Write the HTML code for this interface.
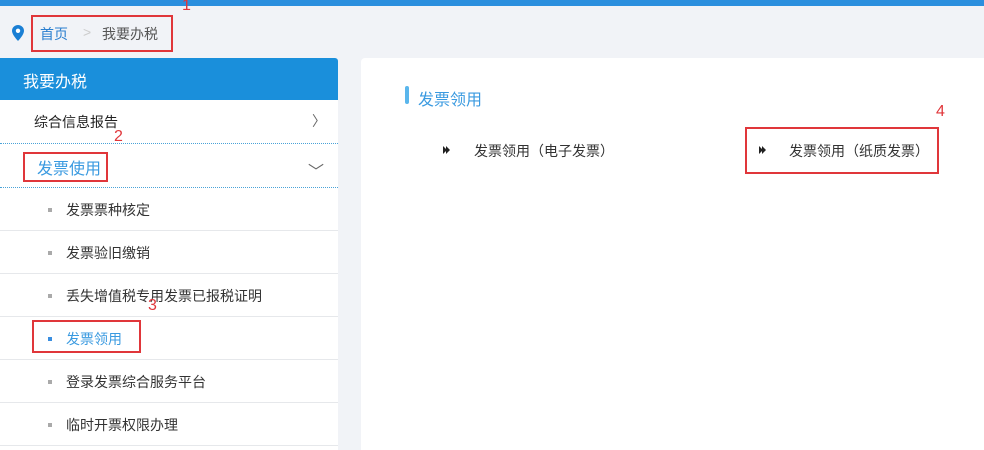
<!DOCTYPE html>
<html><head><meta charset="utf-8"><style>
*{margin:0;padding:0;box-sizing:border-box}
body{width:984px;height:450px;overflow:hidden;background:#f1f3f7;font-family:"Liberation Sans","Noto Sans CJK SC",sans-serif;position:relative;font-size:14px;color:#333}
.a{position:absolute}
.red{position:absolute;border:2px solid #e0363a}
.num{position:absolute;color:#e0363a;font-size:16px}
.sub{position:absolute;left:0;width:338px;height:43px;border-bottom:1px solid #e6e8eb;background:#fff}
.sub span{position:absolute;left:66px;top:12px;font-size:14px;color:#333}
.sub i{position:absolute;left:48px;top:20px;width:4px;height:4px;background:#aaa}
</style></head><body>
<div class="a" style="left:0;top:0;width:984px;height:6px;background:#2b8fde"></div>
<svg class="a" style="left:12px;top:25px" width="12" height="16" viewBox="0 0 12 16"><path d="M6 0C2.7 0 0 2.6 0 5.8 0 10 6 16 6 16s6-6 6-10.2C12 2.6 9.3 0 6 0z" fill="#1a7fd4"/><circle cx="6" cy="5.8" r="2.2" fill="#fff"/></svg>
<div class="a" style="left:40px;top:24px;color:#2a7fcf">首页</div>
<div class="a" style="left:83px;top:24px;color:#ccc">&gt;</div>
<div class="a" style="left:102px;top:24px;color:#555">我要办税</div>
<div class="red" style="left:31px;top:15px;width:142px;height:37px"></div>
<div class="num" style="left:182px;top:-3px">1</div>

<div class="a" style="left:0;top:58px;width:338px;height:392px;background:#fff;border-top-right-radius:3px"></div>
<div class="a" style="left:0;top:58px;width:338px;height:42px;background:#1a8fdb;color:#fff;font-size:16px;padding:10px 0 0 23px;border-top-right-radius:3px">我要办税</div>
<div class="a" style="left:34px;top:112px;color:#222">综合信息报告</div>
<div class="a" style="left:312px;top:111px;color:#666">〉</div>
<div class="a" style="left:0;top:143px;width:338px;border-top:1px dotted #4aa3d8"></div>
<div class="a" style="left:37px;top:155px;color:#3a9ae0;font-size:16px">发票使用</div>
<div class="a" style="left:308px;top:158px;color:#666;font-size:16px">﹀</div>
<div class="a" style="left:0;top:187px;width:338px;border-top:1px dotted #4aa3d8"></div>
<div class="sub" style="top:188px"><i></i><span>发票票种核定</span></div>
<div class="sub" style="top:231px"><i></i><span>发票验旧缴销</span></div>
<div class="sub" style="top:274px"><i></i><span>丢失增值税专用发票已报税证明</span></div>
<div class="sub" style="top:317px"><i style="background:#3a8ee0"></i><span style="color:#3a9ae0">发票领用</span></div>
<div class="sub" style="top:360px"><i></i><span>登录发票综合服务平台</span></div>
<div class="sub" style="top:403px"><i></i><span>临时开票权限办理</span></div>
<div class="red" style="left:23px;top:152px;width:85px;height:30px"></div>
<div class="num" style="left:114px;top:128px">2</div>
<div class="red" style="left:32px;top:320px;width:109px;height:33px"></div>
<div class="num" style="left:148px;top:297px">3</div>

<div class="a" style="left:361px;top:58px;width:623px;height:392px;background:#fff;border-top-left-radius:4px"></div>
<div class="a" style="left:405px;top:86px;width:4px;height:18px;border-radius:2px;background:#5ab6ec"></div>
<div class="a" style="left:418px;top:86px;color:#3a9ae0;font-size:16px">发票领用</div>
<svg class="a" style="left:442px;top:145px" width="10" height="10" viewBox="0 0 10 10"><path d="M1 1L5 5L1 9Z M4 1L8 5L4 9Z" fill="#222"/></svg>
<div class="a" style="left:474px;top:141px;color:#333">发票领用（电子发票）</div>
<svg class="a" style="left:758px;top:145px" width="10" height="10" viewBox="0 0 10 10"><path d="M1 1L5 5L1 9Z M4 1L8 5L4 9Z" fill="#222"/></svg>
<div class="a" style="left:789px;top:141px;color:#333">发票领用（纸质发票）</div>
<div class="red" style="left:745px;top:127px;width:194px;height:47px"></div>
<div class="num" style="left:936px;top:103px">4</div>
</body></html>
